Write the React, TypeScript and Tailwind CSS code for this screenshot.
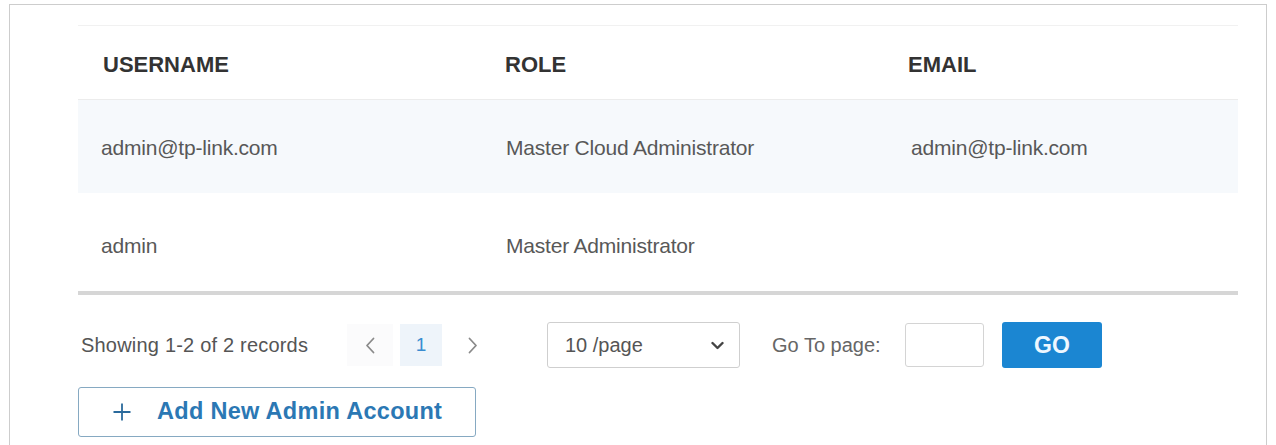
import React from "react";

type Admin = {
  username: string;
  role: string;
  email: string;
};

const admins: Admin[] = [
  {
    username: "admin@tp-link.com",
    role: "Master Cloud Administrator",
    email: "admin@tp-link.com",
  },
  { username: "admin", role: "Master Administrator", email: "" },
];

function Chevron({ dir }: { dir: "left" | "right" | "down" }) {
  if (dir === "down") {
    return (
      <svg width="13" height="9" viewBox="0 0 13 9" fill="none">
        <polyline
          points="1.5,2 6.5,7 11.5,2"
          stroke="#444"
          strokeWidth="2.4"
          strokeLinecap="round"
          strokeLinejoin="round"
        />
      </svg>
    );
  }
  return (
    <svg width="10" height="17" viewBox="0 0 10 17" fill="none">
      <polyline
        points={dir === "left" ? "8.5,1.5 2,8.5 8.5,15.5" : "1.5,1.5 8,8.5 1.5,15.5"}
        stroke="#8a8a8a"
        strokeWidth="1.8"
        strokeLinecap="round"
        strokeLinejoin="round"
      />
    </svg>
  );
}

export default function App() {
  return (
    <div className="h-[445px] w-[1276px] overflow-hidden bg-white pt-[4px] font-['Liberation_Sans',Arial,sans-serif]">
      <div className="ml-[9px] h-full w-[1258px] border-l border-r border-t border-[#cdcdcd] pl-[68px] pt-[20px]">
        <div className="w-[1160px]">
          {/* Table header */}
          <div className="grid h-[75px] grid-cols-[402px_403px_355px] items-center border-b border-t border-b-[#ececec] border-t-[#f1f1f1] pt-[4px] text-[22px] font-bold text-[#333]">
            <div className="pl-[25px]">USERNAME</div>
            <div className="pl-[25px]">ROLE</div>
            <div className="pl-[25px]">EMAIL</div>
          </div>

          {/* Table body */}
          {admins.map((a, i) => (
            <div
              key={a.username}
              className={`grid grid-cols-[402px_403px_355px] items-center text-[21px] tracking-[-0.2px] text-[#585858] ${
                i === 0 ? "h-[93px] bg-[#f6f9fc] pt-[2px]" : "h-[98px] bg-white pt-[8px]"
              }`}
            >
              <div className="pl-[23px]">{a.username}</div>
              <div className="pl-[26px]">{a.role}</div>
              <div className="pl-[28px]">{a.email}</div>
            </div>
          ))}
          <div className="h-[4px] bg-[#d6d6d6]" />

          {/* Pagination */}
          <div className="mt-[27px] flex h-[46px] items-center text-[20px] text-[#555]">
            <span className="w-[269px] pl-[3px] tracking-[0.2px]">Showing 1-2 of 2 records</span>
            <button className="flex h-[42px] w-[46px] items-center justify-center bg-[#fbfbfc]">
              <Chevron dir="left" />
            </button>
            <button className="ml-[7px] flex h-[42px] w-[42px] items-center justify-center bg-[#eef4fa] text-[19px] text-[#3a8cd0]">
              1
            </button>
            <button className="ml-[8px] flex h-[42px] w-[46px] items-center justify-center">
              <Chevron dir="right" />
            </button>

            <div className="ml-[51px] flex h-[46px] w-[193px] items-center justify-between rounded-[3px] border border-[#cfcfcf] pl-[17px] pr-[15px] text-[#555]">
              <span>10 /page</span>
              <Chevron dir="down" />
            </div>

            <span className="ml-[32px] w-[133px] text-[#666]">Go To page:</span>
            <div className="h-[44px] w-[79px] rounded-[3px] border border-[#d4d4d4] bg-white" />
            <button className="ml-[18px] flex h-[46px] w-[100px] items-center justify-center rounded-[3px] bg-[#1b86d2] text-[23px] font-bold text-[#eef7ff]">
              GO
            </button>
          </div>

          {/* Add account */}
          <button className="mt-[19px] flex h-[50px] w-[398px] items-center rounded-[3px] border border-[#86a9c2] pl-[34px] text-[23.5px] font-bold text-[#2b78b4]">
            <svg width="18" height="18" viewBox="0 0 18 18" fill="none">
              <path d="M9 0.5v17M0.5 9h17" stroke="#2a6a9c" strokeWidth="1.8" />
            </svg>
            <span className="ml-[26px] tracking-[0.3px]">Add New Admin Account</span>
          </button>
        </div>
      </div>
    </div>
  );
}
